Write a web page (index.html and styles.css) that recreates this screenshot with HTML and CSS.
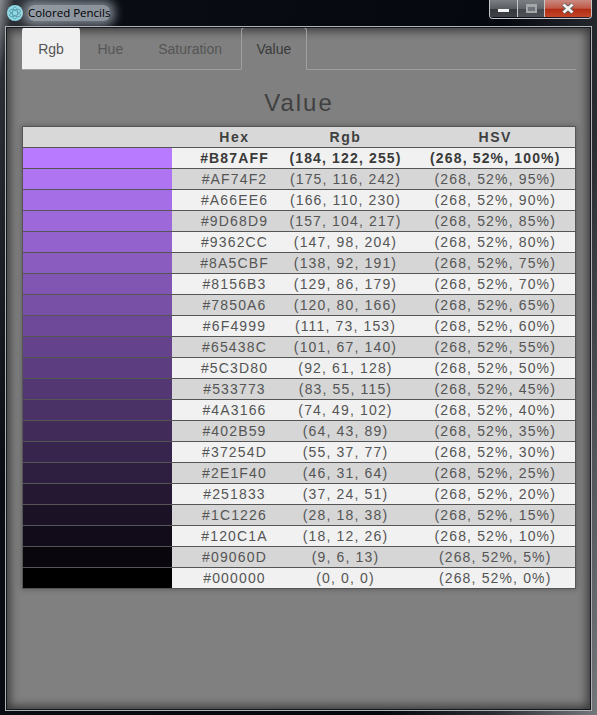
FILE: index.html
```html
<!DOCTYPE html>
<html lang="en">
<head>
    <meta charset="UTF-8">
    <title>Colored Pencils</title>
    <link rel="stylesheet" href="styles.css">
</head>
<body>
<div class="window">
    <div class="titlebar">
        <svg class="app-icon" width="16" height="16" viewBox="0 0 16 16">
            <circle cx="8" cy="8" r="8" fill="#8fdbe6"/>
            <g fill="none" stroke="#4f8f9e" stroke-width="0.7">
                <ellipse cx="8" cy="8" rx="6" ry="2.6" transform="rotate(30 8 8)"/>
                <ellipse cx="8" cy="8" rx="6" ry="2.6" transform="rotate(90 8 8)"/>
                <ellipse cx="8" cy="8" rx="6" ry="2.6" transform="rotate(150 8 8)"/>
            </g>
        </svg>
        <span class="app-title">Colored Pencils</span>
        <div class="controls">
            <span class="ctl ctl-min"><i></i></span>
            <span class="ctl ctl-max"><i></i></span>
            <span class="ctl ctl-close">
                <svg width="14" height="11" viewBox="0 0 14 11">
                    <path d="M2.5 1.5 L11.5 9.5 M11.5 1.5 L2.5 9.5" stroke="#555" stroke-width="4.4" fill="none"/>
                    <path d="M2.5 1.5 L11.5 9.5 M11.5 1.5 L2.5 9.5" stroke="#f2f2f2" stroke-width="3" fill="none"/>
                </svg>
            </span>
        </div>
    </div>
    <div class="client">
        <ul class="tabs">
            <li class="tab tab-rgb">Rgb</li>
            <li class="tab">Hue</li>
            <li class="tab">Saturation</li>
            <li class="tab selected">Value</li>
        </ul>
        <h1 class="heading">Value</h1>
        <table class="colors">
            <thead>
                <tr><th class="swatch"></th><th class="hex">Hex</th><th class="rgb">Rgb</th><th class="hsv">HSV</th></tr>
            </thead>
            <tbody>
                <tr class="base"><td class="swatch" style="background:#B87AFF"></td><td class="hex">#B87AFF</td><td class="rgb">(184, 122, 255)</td><td class="hsv">(268, 52%, 100%)</td></tr>
                <tr><td class="swatch" style="background:#AF74F2"></td><td class="hex">#AF74F2</td><td class="rgb">(175, 116, 242)</td><td class="hsv">(268, 52%, 95%)</td></tr>
                <tr><td class="swatch" style="background:#A66EE6"></td><td class="hex">#A66EE6</td><td class="rgb">(166, 110, 230)</td><td class="hsv">(268, 52%, 90%)</td></tr>
                <tr><td class="swatch" style="background:#9D68D9"></td><td class="hex">#9D68D9</td><td class="rgb">(157, 104, 217)</td><td class="hsv">(268, 52%, 85%)</td></tr>
                <tr><td class="swatch" style="background:#9362CC"></td><td class="hex">#9362CC</td><td class="rgb">(147, 98, 204)</td><td class="hsv">(268, 52%, 80%)</td></tr>
                <tr><td class="swatch" style="background:#8A5CBF"></td><td class="hex">#8A5CBF</td><td class="rgb">(138, 92, 191)</td><td class="hsv">(268, 52%, 75%)</td></tr>
                <tr><td class="swatch" style="background:#8156B3"></td><td class="hex">#8156B3</td><td class="rgb">(129, 86, 179)</td><td class="hsv">(268, 52%, 70%)</td></tr>
                <tr><td class="swatch" style="background:#7850A6"></td><td class="hex">#7850A6</td><td class="rgb">(120, 80, 166)</td><td class="hsv">(268, 52%, 65%)</td></tr>
                <tr><td class="swatch" style="background:#6F4999"></td><td class="hex">#6F4999</td><td class="rgb">(111, 73, 153)</td><td class="hsv">(268, 52%, 60%)</td></tr>
                <tr><td class="swatch" style="background:#65438C"></td><td class="hex">#65438C</td><td class="rgb">(101, 67, 140)</td><td class="hsv">(268, 52%, 55%)</td></tr>
                <tr><td class="swatch" style="background:#5C3D80"></td><td class="hex">#5C3D80</td><td class="rgb">(92, 61, 128)</td><td class="hsv">(268, 52%, 50%)</td></tr>
                <tr><td class="swatch" style="background:#533773"></td><td class="hex">#533773</td><td class="rgb">(83, 55, 115)</td><td class="hsv">(268, 52%, 45%)</td></tr>
                <tr><td class="swatch" style="background:#4A3166"></td><td class="hex">#4A3166</td><td class="rgb">(74, 49, 102)</td><td class="hsv">(268, 52%, 40%)</td></tr>
                <tr><td class="swatch" style="background:#402B59"></td><td class="hex">#402B59</td><td class="rgb">(64, 43, 89)</td><td class="hsv">(268, 52%, 35%)</td></tr>
                <tr><td class="swatch" style="background:#37254D"></td><td class="hex">#37254D</td><td class="rgb">(55, 37, 77)</td><td class="hsv">(268, 52%, 30%)</td></tr>
                <tr><td class="swatch" style="background:#2E1F40"></td><td class="hex">#2E1F40</td><td class="rgb">(46, 31, 64)</td><td class="hsv">(268, 52%, 25%)</td></tr>
                <tr><td class="swatch" style="background:#251833"></td><td class="hex">#251833</td><td class="rgb">(37, 24, 51)</td><td class="hsv">(268, 52%, 20%)</td></tr>
                <tr><td class="swatch" style="background:#1C1226"></td><td class="hex">#1C1226</td><td class="rgb">(28, 18, 38)</td><td class="hsv">(268, 52%, 15%)</td></tr>
                <tr><td class="swatch" style="background:#120C1A"></td><td class="hex">#120C1A</td><td class="rgb">(18, 12, 26)</td><td class="hsv">(268, 52%, 10%)</td></tr>
                <tr><td class="swatch" style="background:#09060D"></td><td class="hex">#09060D</td><td class="rgb">(9, 6, 13)</td><td class="hsv">(268, 52%, 5%)</td></tr>
                <tr><td class="swatch" style="background:#000000"></td><td class="hex">#000000</td><td class="rgb">(0, 0, 0)</td><td class="hsv">(268, 52%, 0%)</td></tr>
            </tbody>
        </table>
    </div>
</div>
</body>
</html>
```

FILE: styles.css
```css
* {
    margin: 0;
    padding: 0;
    box-sizing: border-box;
}

ul {
    list-style: none;
}

html, body {
    height: 100%;
    overflow: hidden;
}

body {
    background: #0b0f16;
    font-family: "Liberation Sans", Arial, sans-serif;
}

.window {
    height: 715px;
    display: flex;
    flex-direction: column;
    padding: 0 5px 4px 5px;
    background: linear-gradient(100deg, #8a8d90 0, #2c3036 2%, #0a0d14 12%, #05080f 70%, #2b2e33 86%, #75787b 100%);
}

.titlebar {
    height: 26px;
    flex: none;
    display: flex;
    align-items: flex-start;
    padding: 5px 0 0 2px;
}

.app-icon {
    flex: none;
}

.app-title {
    margin-left: 5px;
    font-family: "Open Sans", "Noto Sans", sans-serif;
    font-size: 11.5px;
    line-height: 16px;
    color: #000;
    background: rgba(190, 200, 210, 0.72);
    box-shadow: 0 0 10px 5px rgba(190, 200, 210, 0.6);
    border-radius: 6px;
}

.controls {
    margin-left: auto;
    margin-top: -5px;
    display: flex;
    height: 19px;
    border: 1px solid #c4c6c8;
    border-top: 0;
    border-radius: 0 0 4px 4px;
}

.ctl {
    display: flex;
    align-items: center;
    justify-content: center;
    height: 17px;
    border-right: 1px solid #c4c6c8;
}

.ctl-min {
    width: 28px;
    background: linear-gradient(#7b7e82 0, #5a5d62 50%, #34373c 52%, #3f4247 100%);
}

.ctl-min i {
    display: block;
    width: 11px;
    height: 3px;
    margin-top: 4px;
    background: #f4f4f4;
}

.ctl-max {
    width: 27px;
    background: linear-gradient(#7b7e82 0, #62656a 50%, #45484d 52%, #4d5055 100%);
}

.ctl-max i {
    display: block;
    width: 11px;
    height: 9px;
    border: 2px solid #a4a6a8;
    border-top-width: 3px;
    background: #70737a;
}

.ctl-close {
    width: 46px;
    border-right: 0;
    background: linear-gradient(#c98a80 0, #bf5a48 48%, #b12c14 55%, #c4452a 100%);
}

.client {
    flex: 1;
    min-height: 0;
    padding: 0 15px 0 16px;
    background: #808080;
    border: 1px solid #b0b2b4;
    outline: 1px solid #14171c;
    outline-offset: -2px;
    box-shadow: inset 0 0 10px 4px rgba(0, 0, 0, 0.55);
    display: flex;
    flex-direction: column;
}

.tabs {
    display: flex;
    height: 43px;
    flex: none;
    border-bottom: 1px solid #a0a0a0;
    font-size: 14px;
}

.tab {
    height: 42px;
    padding: 0 17.5px;
    line-height: 44px;
    color: #555;
    border-radius: 4px 4px 0 0;
}

.tab-rgb {
    width: 58px;
    padding: 0;
    text-align: center;
    background: #f0f0f0;
    color: #555;
}

.selected {
    margin-left: 1px;
    height: 43px;
    padding: 0 15px;
    line-height: 42px;
    border: 1px solid #a0a0a0;
    border-bottom-color: #808080;
    color: #3a3a3a;
}

.heading {
    margin-top: 19px;
    text-align: center;
    font-size: 24px;
    font-weight: normal;
    line-height: 28px;
    letter-spacing: 2px;
    color: #404040;
}

.colors {
    margin-top: 9px;
    width: 554px;
    table-layout: fixed;
    border-collapse: collapse;
    font-size: 14px;
    letter-spacing: 1.15px;
    color: #555;
    border: 1px solid #555;
    box-shadow: 0 0 6px rgba(0, 0, 0, 0.3);
}

.colors th, .colors td {
    height: 21px;
    padding: 0;
    text-align: center;
    border-bottom: 1px solid #555;
    white-space: nowrap;
    line-height: 19px;
}

.colors th {
    background: #d8d8d8;
    color: #3f3f3f;
    font-weight: bold;
    letter-spacing: 1.6px;
}

.colors .swatch {
    width: 149px;
}

.colors .hex {
    width: 110px;
    padding-left: 16px;
}

.colors .rgb {
    width: 132px;
    padding-right: 4px;
}

.colors .hsv {
    padding-left: 2px;
}

.colors tbody tr:nth-child(odd) td {
    background-color: #f1f1f1;
}

.colors tbody tr:nth-child(even) td {
    background-color: #d6d6d6;
}

.colors tbody .base td {
    font-weight: bold;
    color: #3a3a3a;
}
```
